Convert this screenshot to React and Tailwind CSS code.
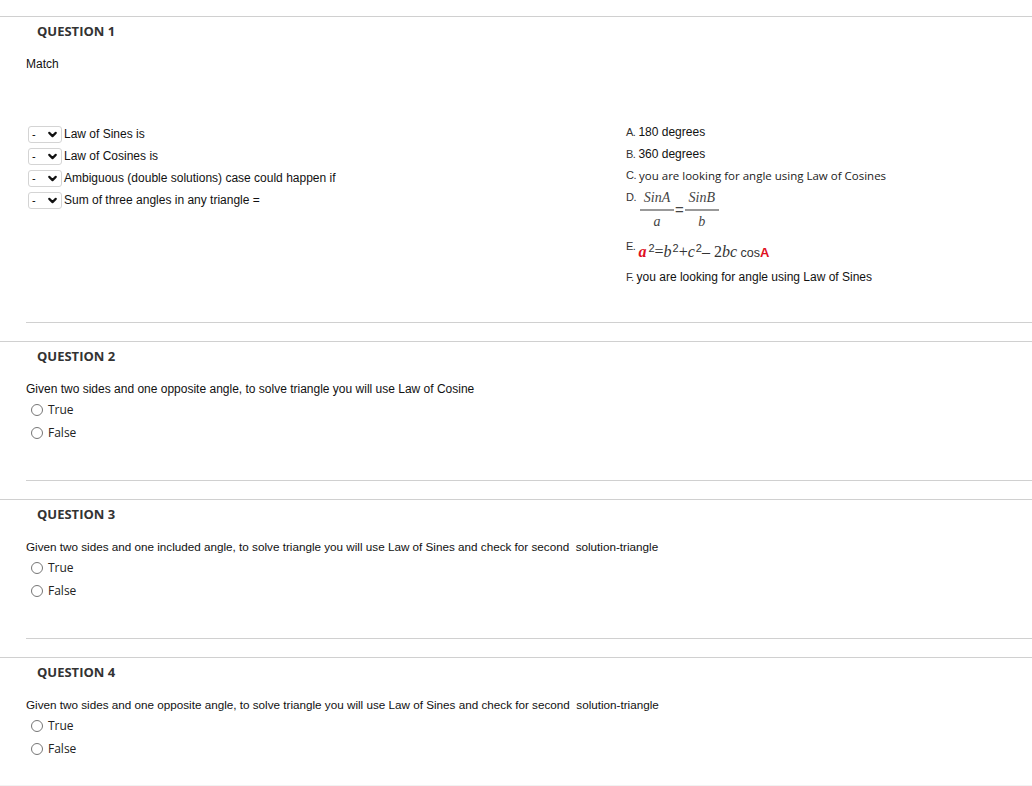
import React from 'react';
import { ChevronDown } from 'lucide-react';

const arial = { fontFamily: '"Liberation Sans", Arial, sans-serif' };
const serif = { fontFamily: '"Liberation Serif", serif' };

const Header = ({ n }) => (
  <div className="pl-[37px] pt-[6px] text-[13px] leading-[16px] font-bold text-[#333]" style={{ fontFamily: '"Open Sans", sans-serif' }}>
    QUESTION {n}
  </div>
);

const Radio = ({ label }) => (
  <label className="flex items-center h-[23px] pl-[31px]">
    <span className="w-[12px] h-[12px] rounded-full border border-[#767676] bg-white"></span>
    <span className="ml-[5px] text-[12px] text-[#222]" style={{ fontFamily: '"Open Sans", sans-serif' }}>{label}</span>
  </label>
);

const TrueFalse = ({ n, text, size }) => (
  <section className="border-t border-[#d0d0d0]">
    <Header n={n} />
    <p className={`mt-[17px] pl-[26px] leading-[16px] text-[#111] ${size}`} style={arial}>{text}</p>
    <div className="mt-[1px]">
      <Radio label="True" />
      <Radio label="False" />
    </div>
  </section>
);

const Divider = () => (
  <div className="pt-[36px] pb-[18px]">
    <div className="ml-[26px] border-t border-[#d0d0d0]"></div>
  </div>
);

const Select = () => (
  <div className="w-[34px] h-[17px] border border-[#d4d4d4] rounded-[3px] flex items-center justify-between pl-[3px] pr-[2px] bg-white">
    <span className="text-[11px] leading-none text-[#000]">-</span>
    <ChevronDown size={13} strokeWidth={4} className="text-[#111]" />
  </div>
);

const Letter = ({ c }) => (
  <span className="text-[11px] text-[#333] tracking-[-0.5px] mr-[3px]" style={arial}>{c}.</span>
);

const Frac = ({ num, den }) => (
  <span className="inline-flex flex-col items-center">
    <span className="italic text-[14px] leading-[16px] text-[#444] px-[3px]" style={serif}>{num}</span>
    <span className="w-[34px] h-[1.5px] bg-[#999] my-[3px]"></span>
    <span className="italic text-[14px] leading-[16px] text-[#444]" style={serif}>{den}</span>
  </span>
);

export default function App() {
  const prompts = [
    'Law of Sines is',
    'Law of Cosines is',
    'Ambiguous (double solutions) case could happen if',
    'Sum of three angles in any triangle =',
  ];

  return (
    <div className="bg-white w-[1032px] min-h-[786px] pt-[16px]" style={arial}>
      {/* Question 1 */}
      <section className="border-t border-[#d0d0d0]">
        <Header n={1} />
        <p className="mt-[17px] pl-[26px] text-[12px] leading-[16px] text-[#111]">Match</p>

        <div className="mt-[49px] flex">
          <div className="w-[626px] pl-[28px] pt-[2px]">
            {prompts.map((p) => (
              <div key={p} className="flex items-center h-[22px]">
                <Select />
                <span className="ml-[2px] text-[12px] text-[#111]">{p}</span>
              </div>
            ))}
          </div>

          <div className="text-[12px] text-[#111]">
            <div className="flex items-center h-[22px]"><Letter c="A" />180 degrees</div>
            <div className="flex items-center h-[22px]"><Letter c="B" />360 degrees</div>
            <div className="flex items-center h-[21px]">
              <Letter c="C" />
              <span className="text-[11.5px] text-[#222]" style={{ fontFamily: '"Open Sans", sans-serif' }}>you are looking for angle using Law of Cosines</span>
            </div>
            <div className="flex items-start h-[46px] pt-[3px]">
              <Letter c="D" />
              <span className="inline-flex items-center ml-[1px] mt-[1px]">
                <Frac num="SinA" den="a" />
                <span className="mx-[1px] text-[15px] text-[#444]">=</span>
                <Frac num="SinB" den="b" />
              </span>
            </div>
            <div className="flex items-start h-[34px] pt-[6px]">
              <Letter c="E" />
              <span className="mt-[4px] text-[16px] leading-[20px] text-[#333]">
                <span className="italic font-bold text-[#e0101e]" style={serif}>a</span>
                <sup className="text-[11px] ml-[2px]">2</sup>
                <span style={serif}>=</span>
                <span className="italic" style={serif}>b</span>
                <sup className="text-[11px] ml-[1px]">2</sup>
                <span style={serif}>+</span>
                <span className="italic" style={serif}>c</span>
                <sup className="text-[11px] ml-[1px]">2</sup>
                <span style={serif}>– 2</span>
                <span className="italic" style={serif}>bc</span>
                <span className="text-[12.5px]"> cos</span>
                <span className="text-[13px] font-bold text-[#e0101e]">A</span>
              </span>
            </div>
            <div className="flex items-center h-[22px]"><Letter c="F" />you are looking for angle using Law of Sines</div>
          </div>
        </div>
        <div className="pt-[34px] pb-[18px]">
          <div className="ml-[26px] border-t border-[#d0d0d0]"></div>
        </div>
      </section>

      <TrueFalse n={2} size="text-[12px]" text="Given two sides and one opposite angle, to solve triangle you will use Law of Cosine" />
      <Divider />
      <TrueFalse n={3} size="text-[11.7px]" text={'Given two sides and one included angle, to solve triangle you will use Law of Sines and check for second \u00a0solution-triangle'} />
      <Divider />
      <TrueFalse n={4} size="text-[11.7px]" text={'Given two sides and one opposite angle, to solve triangle you will use Law of Sines and check for second \u00a0solution-triangle'} />
      <div className="mt-[25px] h-[4px] bg-[#f2f2f2]"></div>
    </div>
  );
}
